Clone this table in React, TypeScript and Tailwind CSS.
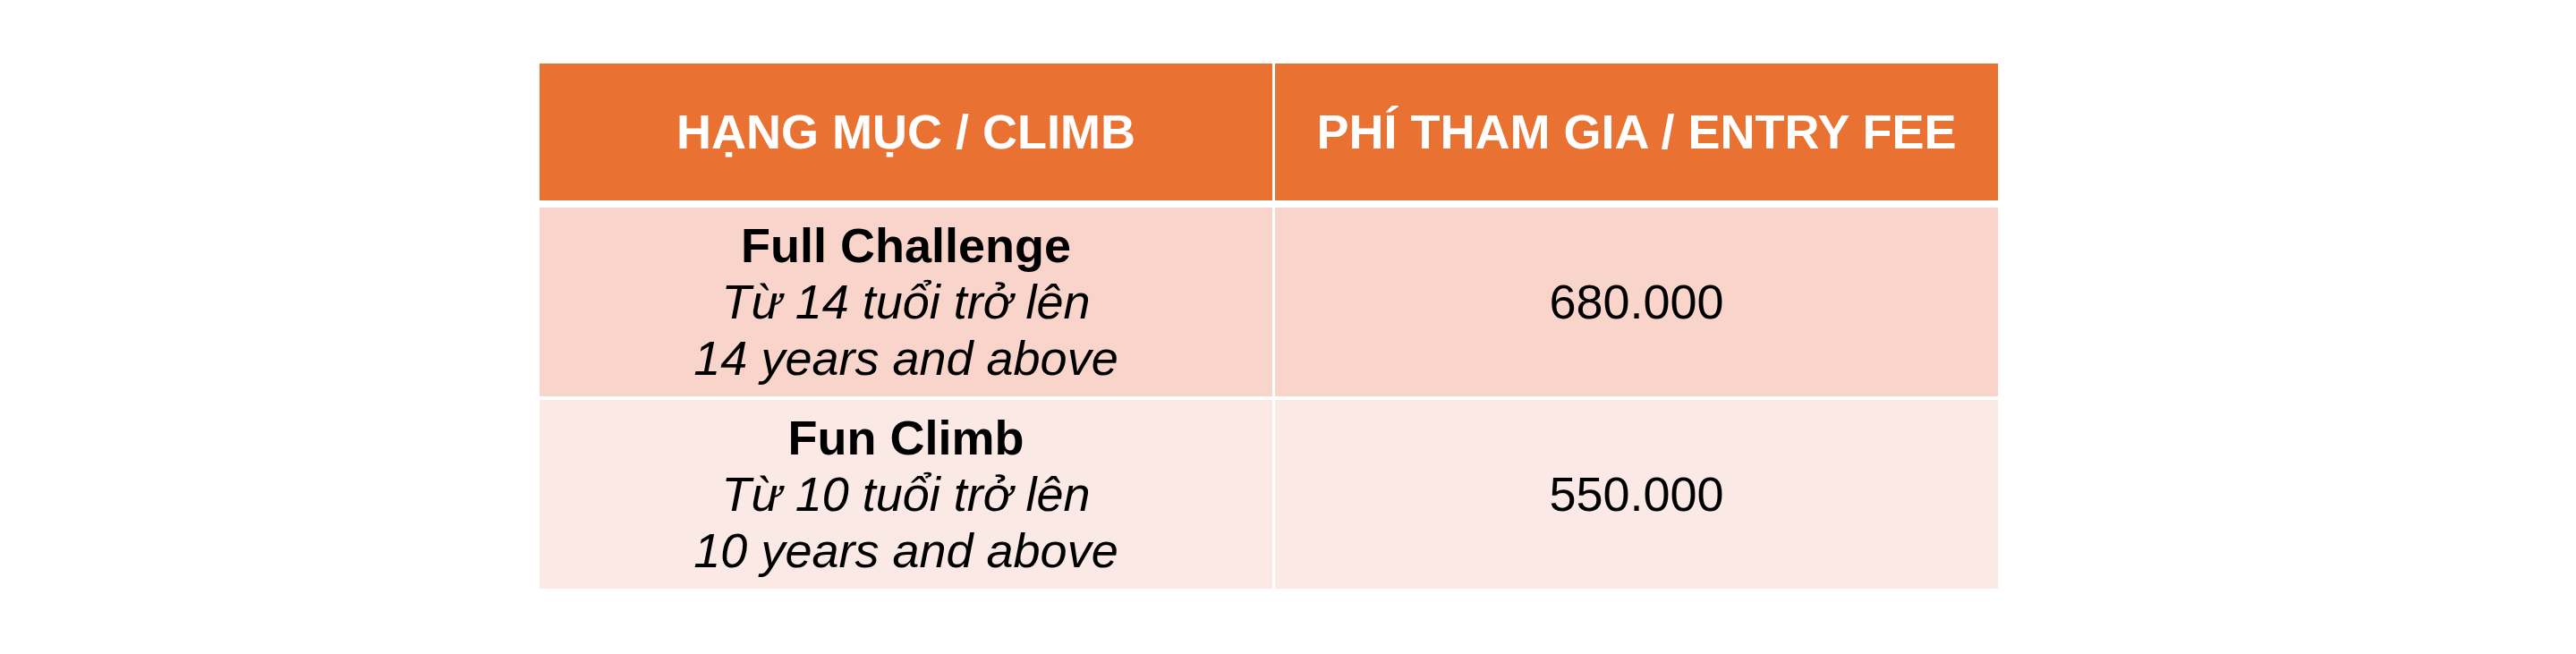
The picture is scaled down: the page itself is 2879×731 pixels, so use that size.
const rows = [
  {
    name: "Full Challenge",
    vi: "Từ 14 tuổi trở lên",
    en: "14 years and above",
    fee: "680.000",
    bg: "bg-[#f8d4cb]",
  },
  {
    name: "Fun Climb",
    vi: "Từ 10 tuổi trở lên",
    en: "10 years and above",
    fee: "550.000",
    bg: "bg-[#fae9e5]",
  },
];

export default function App() {
  return (
    <div className="w-full h-[731px] bg-white pt-[71px] pl-[603px] font-['Liberation_Sans',Arial,sans-serif] text-[54px] leading-[63px] text-black">
      <div className="flex flex-col w-[1630px]">
        {/* Header */}
        <div className="flex gap-[3px] h-[153px]">
          <div className="w-[819px] bg-[#e97132] flex items-center justify-center">
            <span className="font-bold text-white">HẠNG MỤC / CLIMB</span>
          </div>
          <div className="flex-1 bg-[#e97132] flex items-center justify-center">
            <span className="font-bold text-white">PHÍ THAM GIA / ENTRY FEE</span>
          </div>
        </div>

        {/* Body rows */}
        <div className="flex flex-col gap-[4px] mt-[8px]">
          {rows.map((r) => (
            <div key={r.name} className="flex gap-[3px] h-[211px]">
              <div className={`w-[819px] ${r.bg} flex flex-col items-center justify-center text-center`}>
                <span className="font-bold">{r.name}</span>
                <span className="italic">{r.vi}</span>
                <span className="italic">{r.en}</span>
              </div>
              <div className={`flex-1 ${r.bg} flex items-center justify-center`}>
                <span>{r.fee}</span>
              </div>
            </div>
          ))}
        </div>
      </div>
    </div>
  );
}
